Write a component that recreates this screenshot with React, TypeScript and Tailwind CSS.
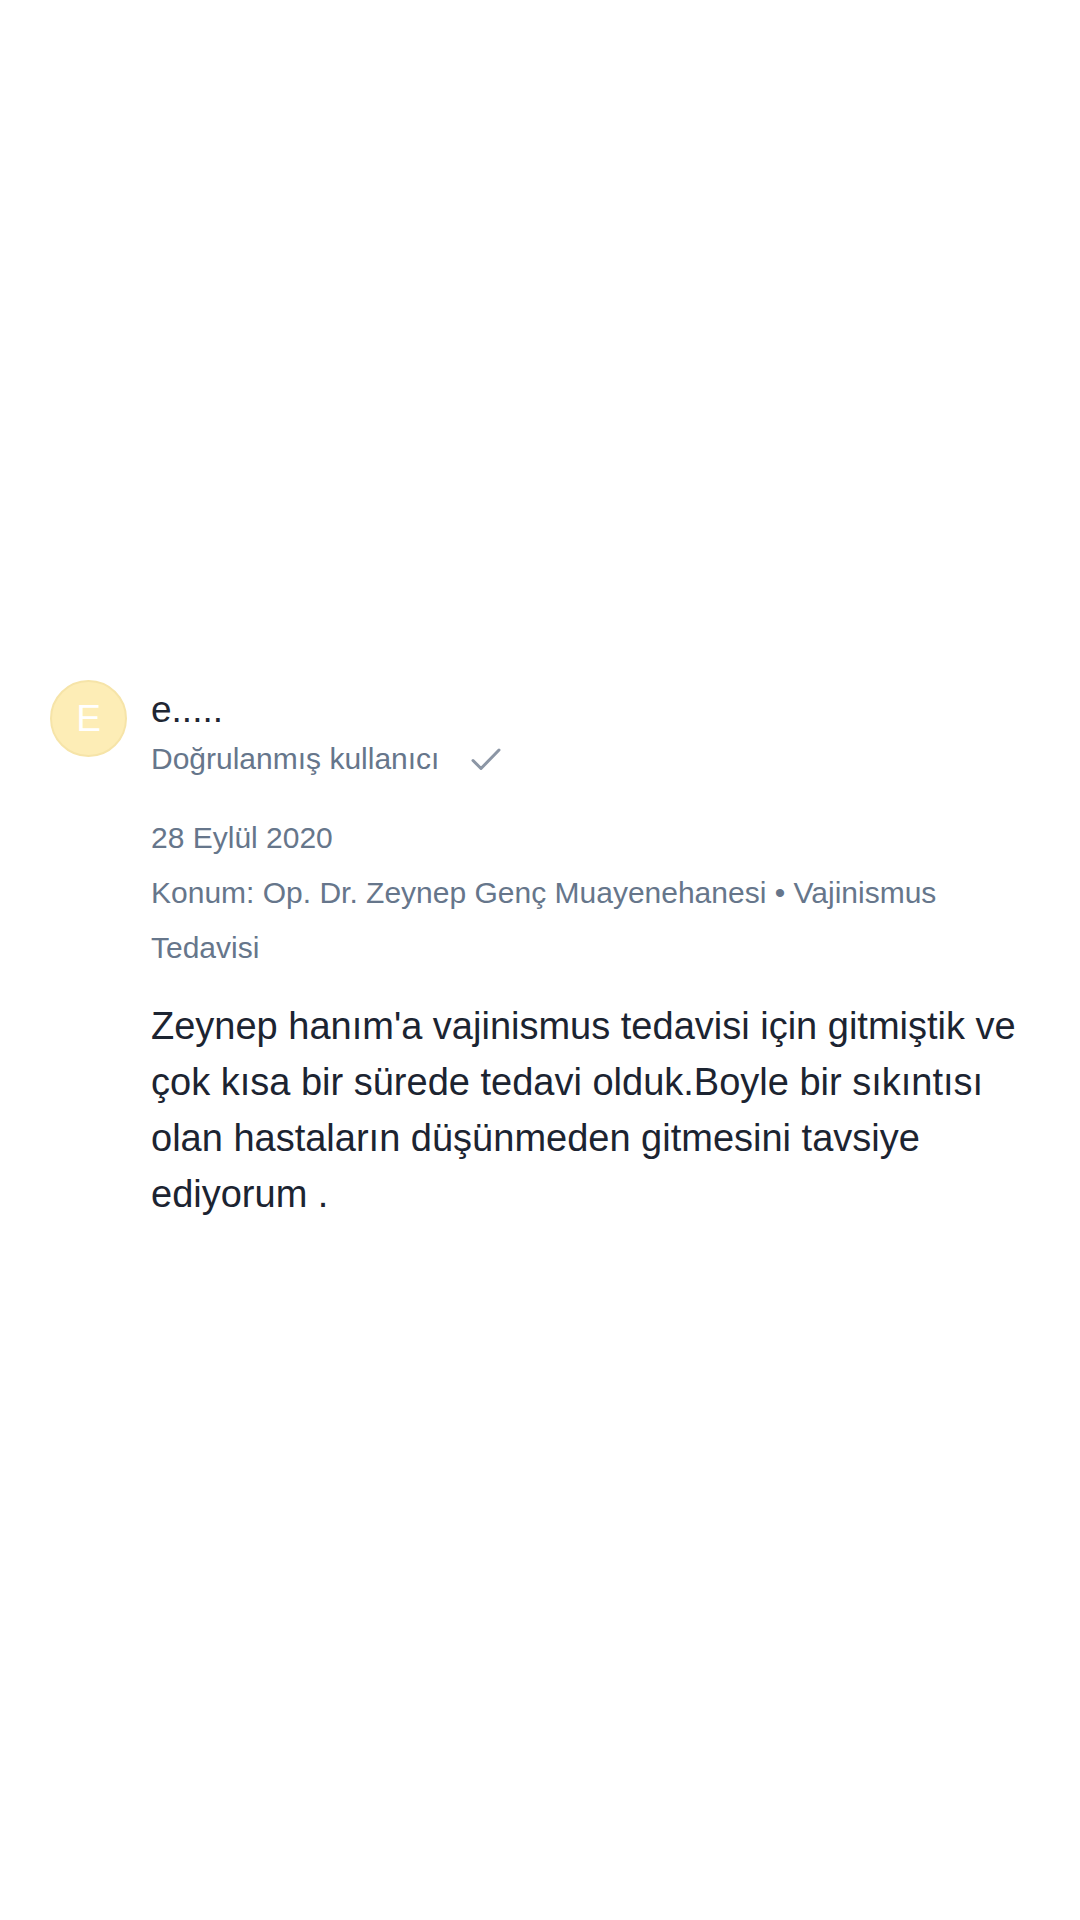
import React from "react";

export default function App() {
  return (
    <div
      className="w-[1080px] h-[1920px] bg-white overflow-hidden"
      style={{ fontFamily: '"Liberation Sans", Arial, Helvetica, sans-serif' }}
    >
      <div className="flex items-start pt-[680px] pl-[50px] pr-[40px] gap-[24px]">
        <div className="w-[77px] h-[77px] shrink-0 rounded-full bg-[#fdedb6] border-2 border-[#f6e4a8] flex items-center justify-center">
          <span className="text-white text-[37px] leading-none">E</span>
        </div>
        <div className="flex-1 flex flex-col mt-[8px]">
          <div className="text-[37px] leading-[44px] text-[#1f2633]">e.....</div>
          <div className="flex items-center gap-[32px] text-[30px] leading-[54px] text-[#66768b]">
            <span>Doğrulanmış kullanıcı</span>
            <svg width="30" height="24" viewBox="0 0 30 24" fill="none">
              <path
                d="M2 13.5 L10 21.5 L28 3"
                stroke="#8c96a5"
                strokeWidth="3"
                strokeLinecap="round"
                strokeLinejoin="round"
              />
            </svg>
          </div>
          <div className="mt-[24px] text-[30px] leading-[55px] text-[#66768b]">
            <div>28 Eylül 2020</div>
            <div>Konum: Op. Dr. Zeynep Genç Muayenehanesi • Vajinismus Tedavisi</div>
          </div>
          <p className="mt-[23px] text-[38px] leading-[56px] text-[#1c2431]">
            Zeynep hanım'a vajinismus tedavisi için gitmiştik ve çok kısa bir sürede tedavi olduk.Boyle bir sıkıntısı olan hastaların düşünmeden gitmesini tavsiye ediyorum .
          </p>
        </div>
      </div>
    </div>
  );
}
